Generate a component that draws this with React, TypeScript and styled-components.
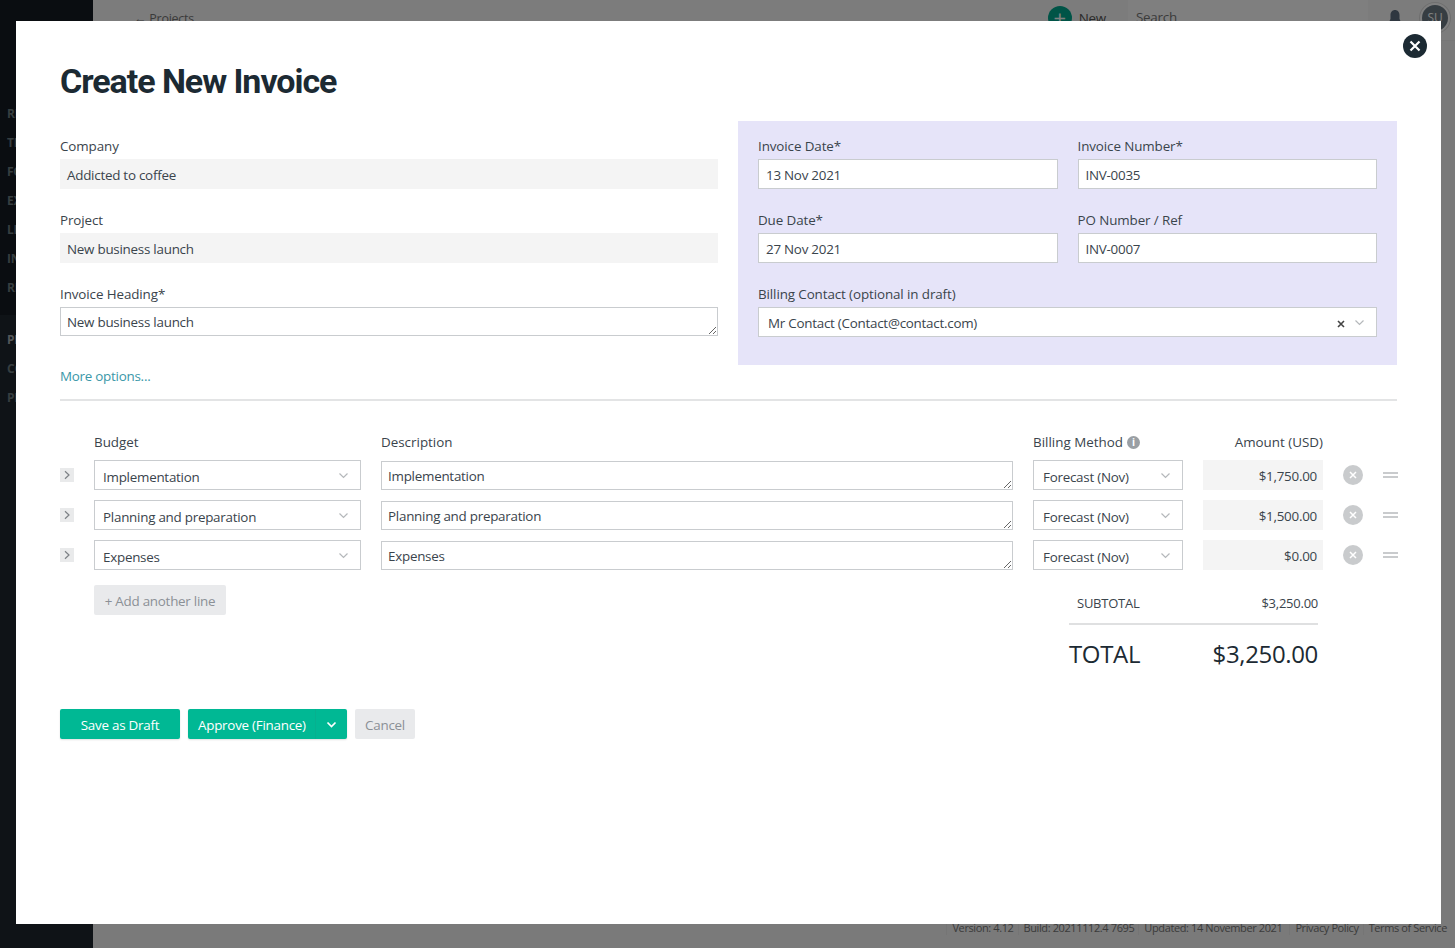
import React from 'react'
import styled, { createGlobalStyle } from 'styled-components'

const Colors = {
  ink: '#1c2a33',
  text: '#3a444c',
  border: '#c9cccf',
  readonly: '#f4f4f4',
  lilac: '#e6e4f9',
  green: '#00b894',
  teal: '#3a97a8',
  muted: '#8b9096',
}

const GlobalStyle = createGlobalStyle`
  html, body {
    margin: 0;
    height: 100%;
    overflow: hidden;
    background: #f5f5f5;
    font-family: "Open Sans", "Noto Sans", sans-serif;
    font-size: 13.4px;
    letter-spacing: -0.25px;
    color: ${Colors.text};
  }
  * { box-sizing: border-box; }
`

type Line = { budget: string; amount: string }

const lines: Line[] = [
  { budget: 'Implementation', amount: '$1,750.00' },
  { budget: 'Planning and preparation', amount: '$1,500.00' },
  { budget: 'Expenses', amount: '$0.00' },
]

const navTop = ['RESOURCES', 'TIME', 'FORECAST', 'EXPENSES', 'LEAVE', 'INVOICES', 'REPORTS']
const navBottom = ['PROJECTS', 'CONTACTS', 'PEOPLE']

const Chevron = ({ color = '#b5b8bb', weight = 1.2 }: { color?: string; weight?: number }) => (
  <svg width="11" height="11" viewBox="0 0 11 11" fill="none">
    <path d="M1.500 3.500 5.500 7.500 9.500 3.500" stroke={color} strokeWidth={weight} />
  </svg>
)

export default function App() {
  return (
    <>
      <GlobalStyle />
      <Page>
        <Sidebar>
          <NavGroup>
            {navTop.map((n) => <NavItem key={n}>{n}</NavItem>)}
          </NavGroup>
          <NavGroupLower>
            {navBottom.map((n, i) => <NavItem key={n} $active={i === 0}>{n}</NavItem>)}
          </NavGroupLower>
        </Sidebar>
        <Main>
          <TopBar>
            <BackLink>← Projects</BackLink>
            <NewButton>
              <NewCircle>+</NewCircle>
              New
            </NewButton>
            <SearchBox>Search</SearchBox>
            <svg width="14" height="18" viewBox="0 0 14 18" fill="#5f6f80">
              <path d="M7 1c-2.800 0-4.500 2.200-4.500 5v4L1 13v1h12v-1l-1.500-3V6C11.500 3.200 9.800 1 7 1Zm-2 14a2 2 0 0 0 4 0Z" />
            </svg>
            <Avatar>SU</Avatar>
          </TopBar>
          <Footer>
            <FooterItem>Version: 4.12</FooterItem>
            <FooterItem>Build: 20211112.4 7695</FooterItem>
            <FooterItem>Updated: 14 November 2021</FooterItem>
            <FooterItem $spaced>Privacy Policy</FooterItem>
            <FooterItem>Terms of Service</FooterItem>
          </Footer>
        </Main>
      </Page>
      <Backdrop />
      <Modal>
        <CloseButton aria-label="Close">
          <svg width="12" height="12" viewBox="0 0 12 12" fill="none">
            <path d="M1.500 1.500l9 9M10.500 1.500l-9 9" stroke="#fff" strokeWidth="2.200" />
          </svg>
        </CloseButton>
        <Title>Create New Invoice</Title>

        <TopGrid>
          <LeftColumn>
            <Field>
              <Label>Company</Label>
              <ReadOnlyBox>Addicted to coffee</ReadOnlyBox>
            </Field>
            <Field>
              <Label>Project</Label>
              <ReadOnlyBox>New business launch</ReadOnlyBox>
            </Field>
            <Field>
              <Label>Invoice Heading*</Label>
              <TextArea defaultValue="New business launch" rows={1} />
            </Field>
            <MoreOptions href="#">More options...</MoreOptions>
          </LeftColumn>
          <DetailsPanel>
            <Field>
              <Label>Invoice Date*</Label>
              <TextInput defaultValue="13 Nov 2021" />
            </Field>
            <Field>
              <Label>Invoice Number*</Label>
              <TextInput defaultValue="INV-0035" />
            </Field>
            <Field>
              <Label>Due Date*</Label>
              <TextInput defaultValue="27 Nov 2021" />
            </Field>
            <Field>
              <Label>PO Number / Ref</Label>
              <TextInput defaultValue="INV-0007" />
            </Field>
            <WideField>
              <Label>Billing Contact (optional in draft)</Label>
              <SelectBox $inset={9}>
                <SelectValue $raised>Mr Contact (Contact@contact.com)</SelectValue>
                <ClearMark>
                  <svg width="8" height="8" viewBox="0 0 8 8" fill="none">
                    <path d="M1 1l6 6M7 1 1 7" stroke="#444" strokeWidth="1.600" />
                  </svg>
                </ClearMark>
                <Chevron />
              </SelectBox>
            </WideField>
          </DetailsPanel>
        </TopGrid>

        <Divider />

        <LineHeader>
          <span />
          <HeadCell>Budget</HeadCell>
          <HeadCell>Description</HeadCell>
          <HeadCell>
            Billing Method
            <InfoDot>i</InfoDot>
          </HeadCell>
          <HeadCellRight>Amount (USD)</HeadCellRight>
        </LineHeader>

        {lines.map((l) => (
          <LineRow key={l.budget}>
            <ExpandButton>
              <svg width="10" height="10" viewBox="0 0 10 10" fill="none">
                <path d="M3 1.200 7 5 3 8.800" stroke="#7c8085" strokeWidth="1.200" />
              </svg>
            </ExpandButton>
            <SelectBox $inset={8}>
              <SelectValue>{l.budget}</SelectValue>
              <Chevron />
            </SelectBox>
            <RowTextArea defaultValue={l.budget} rows={1} />
            <SelectBox $inset={9}>
              <SelectValue>Forecast (Nov)</SelectValue>
              <Chevron />
            </SelectBox>
            <AmountBox>{l.amount}</AmountBox>
            <RemoveButton>
              <svg width="8" height="8" viewBox="0 0 8 8" fill="none">
                <path d="M1 1l6 6M7 1 1 7" stroke="#fff" strokeWidth="1.500" />
              </svg>
            </RemoveButton>
            <DragHandle />
          </LineRow>
        ))}

        <SummaryRow>
          <AddLine>+ Add another line</AddLine>
          <Totals>
            <SubtotalRow>
              <span>SUBTOTAL</span>
              <span>$3,250.00</span>
            </SubtotalRow>
            <TotalRow>
              <span>TOTAL</span>
              <span>$3,250.00</span>
            </TotalRow>
          </Totals>
        </SummaryRow>

        <Actions>
          <PrimaryButton>Save as Draft</PrimaryButton>
          <SplitButton>
            <SplitLabel>Approve (Finance)</SplitLabel>
            <SplitCaret>
              <Chevron color="#fff" weight={1.700} />
            </SplitCaret>
          </SplitButton>
          <CancelButton>Cancel</CancelButton>
        </Actions>
      </Modal>
    </>
  )
}

const Page = styled.div`
  display: flex;
  height: 100vh;
`

const Sidebar = styled.div`
  width: 93px;
  flex: none;
  display: flex;
  flex-direction: column;
  padding-top: 99px;
  background: #151a22;
`

const NavGroup = styled.div`
  display: flex;
  flex-direction: column;
  padding-bottom: 13px;
`

const NavGroupLower = styled(NavGroup)`
  flex: 1;
  padding-top: 10px;
  background: #1f262f;
`

const NavItem = styled.div<{ $active?: boolean }>`
  height: 29px;
  padding-left: 7px;
  line-height: 29px;
  font-size: 12px;
  font-weight: 700;
  white-space: nowrap;
  color: ${(p) => (p.$active ? '#a9aeb3' : '#6d7c80')};
`

const Main = styled.div`
  flex: 1;
  display: flex;
  flex-direction: column;
  justify-content: space-between;
`

const TopBar = styled.div`
  height: 41px;
  display: flex;
  align-items: center;
  gap: 20px;
  padding: 0 7px 4px 41px;
  background: #f8f8f8;
  border-bottom: 1px solid #eee;
`

const BackLink = styled.div`
  flex: 1;
  font-size: 12.5px;
  color: #777;
`

const NewButton = styled.div`
  display: flex;
  align-items: center;
  gap: 7px;
  margin-right: 2px;
  color: #555;
`

const NewCircle = styled.div`
  width: 24px;
  height: 24px;
  border-radius: 50%;
  background: #00a98f;
  color: #fff;
  font-size: 22px;
  line-height: 22px;
  text-align: center;
`

const SearchBox = styled.div`
  width: 240px;
  height: 36px;
  padding: 8px;
  background: #fff;
  color: #777;
`

const Avatar = styled.div`
  width: 26px;
  height: 26px;
  border-radius: 50%;
  background: #6d7a85;
  box-shadow: 0 0 0 2px #fff, 0 0 0 3px #ddd;
  color: #fff;
  font-size: 12px;
  line-height: 26px;
  text-align: center;
`

const Footer = styled.div`
  display: flex;
  justify-content: flex-end;
  gap: 4px;
  padding: 0 8px 13px 0;
  font-size: 11px;
  letter-spacing: -0.39px;
  line-height: 14px;
  color: #777;
`

const FooterItem = styled.span<{ $spaced?: boolean }>`
  padding-left: 5px;
  margin-left: ${(p) => (p.$spaced ? 3 : 0)}px;
  border-left: 1px solid #ebebeb;
`

const Backdrop = styled.div`
  position: fixed;
  inset: 0;
  background: rgba(0, 0, 0, 0.5);
`

const Modal = styled.div`
  position: fixed;
  top: 21px;
  left: 16px;
  width: 1425px;
  height: 903px;
  padding: 36px 44px 0;
  background: #fff;
`

const CloseButton = styled.button`
  position: absolute;
  top: 13px;
  right: 14px;
  width: 24px;
  height: 24px;
  display: flex;
  align-items: center;
  justify-content: center;
  padding: 0;
  border: 0;
  border-radius: 50%;
  background: ${Colors.ink};
`

const Title = styled.h1`
  margin: 0 0 19px;
  height: 45px;
  font-family: Roboto, "Liberation Sans", sans-serif;
  font-size: 34px;
  letter-spacing: -1.05px;
  line-height: 48px;
  font-weight: 700;
  color: ${Colors.ink};
`

const TopGrid = styled.div`
  display: grid;
  grid-template-columns: 658px 659px;
  gap: 20px;
`

const LeftColumn = styled.div`
  display: flex;
  flex-direction: column;
  gap: 20px;
  padding-top: 14px;
`

const DetailsPanel = styled.div`
  display: grid;
  grid-template-columns: 1fr 1fr;
  align-content: start;
  gap: 20px;
  height: 244px;
  padding: 14px 20px 0;
  background: ${Colors.lilac};
`

const Field = styled.div`
  display: flex;
  flex-direction: column;
`

const WideField = styled(Field)`
  grid-column: 1 / -1;
`

const Label = styled.label`
  height: 24px;
  line-height: 22px;
  letter-spacing: -0.1px;
  color: ${Colors.text};
`

const ReadOnlyBox = styled.div`
  height: 30px;
  padding: 0 7px;
  line-height: 32px;
  background: ${Colors.readonly};
`

const TextInput = styled.input`
  height: 30px;
  padding: 2px 7px 0;
  border: 1px solid ${Colors.border};
  border-radius: 0;
  outline: none;
  background: #fff;
  font: inherit;
  letter-spacing: inherit;
  color: ${Colors.text};
`

const TextArea = styled.textarea`
  display: block;
  width: 100%;
  height: 29px;
  padding: 5px 6px;
  border: 1px solid ${Colors.border};
  border-radius: 0;
  outline: none;
  overflow: hidden;
  background: #fff;
  font: inherit;
  letter-spacing: inherit;
  line-height: 18px;
  color: ${Colors.text};
`

const RowTextArea = styled(TextArea)`
  margin-top: 1px;
`

const MoreOptions = styled.a`
  margin-top: -10px;
  padding-top: 20px;
  line-height: 20px;
  color: ${Colors.teal};
  text-decoration: none;
`

const SelectBox = styled.div<{ $inset: number }>`
  height: 30px;
  display: flex;
  align-items: center;
  padding: 0 11px 0 ${(p) => p.$inset}px;
  border: 1px solid ${Colors.border};
  background: #fff;
`

const SelectValue = styled.div<{ $raised?: boolean }>`
  flex: 1;
  padding-top: ${(p) => (p.$raised ? 1 : 3)}px;
  white-space: nowrap;
`

const ClearMark = styled.div`
  display: flex;
  margin-right: 9px;
  padding-top: 3px;
`

const Divider = styled.div`
  height: 2px;
  margin: 13px 0 32px;
  background: #e3e4e5;
`

const LineHeader = styled.div`
  display: grid;
  grid-template-columns: 14px 267px 632px 150px 120px;
  gap: 20px;
  height: 27px;
  letter-spacing: 0;
`

const HeadCell = styled.div`
  display: flex;
  align-items: center;
  height: 18px;
  color: ${Colors.text};
`

const HeadCellRight = styled(HeadCell)`
  justify-content: flex-end;
`

const InfoDot = styled.span`
  width: 13px;
  height: 13px;
  margin-left: 4px;
  border-radius: 50%;
  background: #9a9fa4;
  color: #fff;
  font-size: 10px;
  font-weight: 700;
  line-height: 13px;
  text-align: center;
`

const LineRow = styled.div`
  display: grid;
  grid-template-columns: 14px 267px 632px 150px 120px 20px 15px;
  gap: 20px;
  align-items: start;
  height: 30px;
  margin-bottom: 10px;
`

const ExpandButton = styled.div`
  width: 14px;
  height: 14px;
  margin-top: 8px;
  display: flex;
  align-items: center;
  justify-content: center;
  background: #e9eaeb;
`

const AmountBox = styled.div`
  height: 30px;
  padding-right: 6px;
  line-height: 32px;
  text-align: right;
  background: ${Colors.readonly};
`

const RemoveButton = styled.div`
  width: 20px;
  height: 20px;
  margin-top: 5px;
  display: flex;
  align-items: center;
  justify-content: center;
  border-radius: 50%;
  background: #c9cbcd;
`

const DragHandle = styled.div`
  width: 15px;
  height: 6px;
  margin-top: 12px;
  border-top: 2px solid #c9cbcd;
  border-bottom: 2px solid #c9cbcd;
`

const SummaryRow = styled.div`
  display: flex;
  justify-content: space-between;
  align-items: flex-start;
  padding: 5px 0 0 34px;
`

const AddLine = styled.button`
  width: 132px;
  height: 30px;
  padding: 2px 0 0;
  border: 0;
  border-radius: 2px;
  background: #e9eaec;
  font: inherit;
  letter-spacing: inherit;
  color: ${Colors.muted};
`

const Totals = styled.div`
  width: 249px;
  margin-right: 79px;
`

const SubtotalRow = styled.div`
  display: flex;
  justify-content: space-between;
  height: 40px;
  padding: 8px 0 0 8px;
  line-height: 20px;
  border-bottom: 2px solid #dfe0e1;
  font-size: 13px;
`

const TotalRow = styled.div`
  display: flex;
  justify-content: space-between;
  margin-top: 11px;
  font-size: 24px;
  letter-spacing: -0.35px;
  line-height: 36px;
  color: ${Colors.ink};
`

const Actions = styled.div`
  display: flex;
  gap: 8px;
  margin-top: 37px;
`

const PrimaryButton = styled.button`
  width: 120px;
  height: 30px;
  padding: 2px 0 0;
  border: 0;
  border-radius: 2px;
  background: ${Colors.green};
  box-shadow: 0 1px 2px rgba(0, 0, 0, 0.12);
  font: inherit;
  letter-spacing: inherit;
  color: #fff;
`

const SplitButton = styled.div`
  width: 159px;
  height: 30px;
  display: flex;
  border-radius: 2px;
  background: ${Colors.green};
  box-shadow: 0 1px 2px rgba(0, 0, 0, 0.12);
  color: #fff;
`

const SplitLabel = styled.div`
  flex: 1;
  padding-left: 10px;
  line-height: 32px;
`

const SplitCaret = styled.div`
  width: 32px;
  display: flex;
  align-items: center;
  justify-content: center;
  border-left: 1px solid #06b08f;
`

const CancelButton = styled.button`
  width: 60px;
  height: 30px;
  padding: 2px 0 0;
  border: 0;
  border-radius: 2px;
  background: #e9eaec;
  font: inherit;
  letter-spacing: inherit;
  color: ${Colors.muted};
`
